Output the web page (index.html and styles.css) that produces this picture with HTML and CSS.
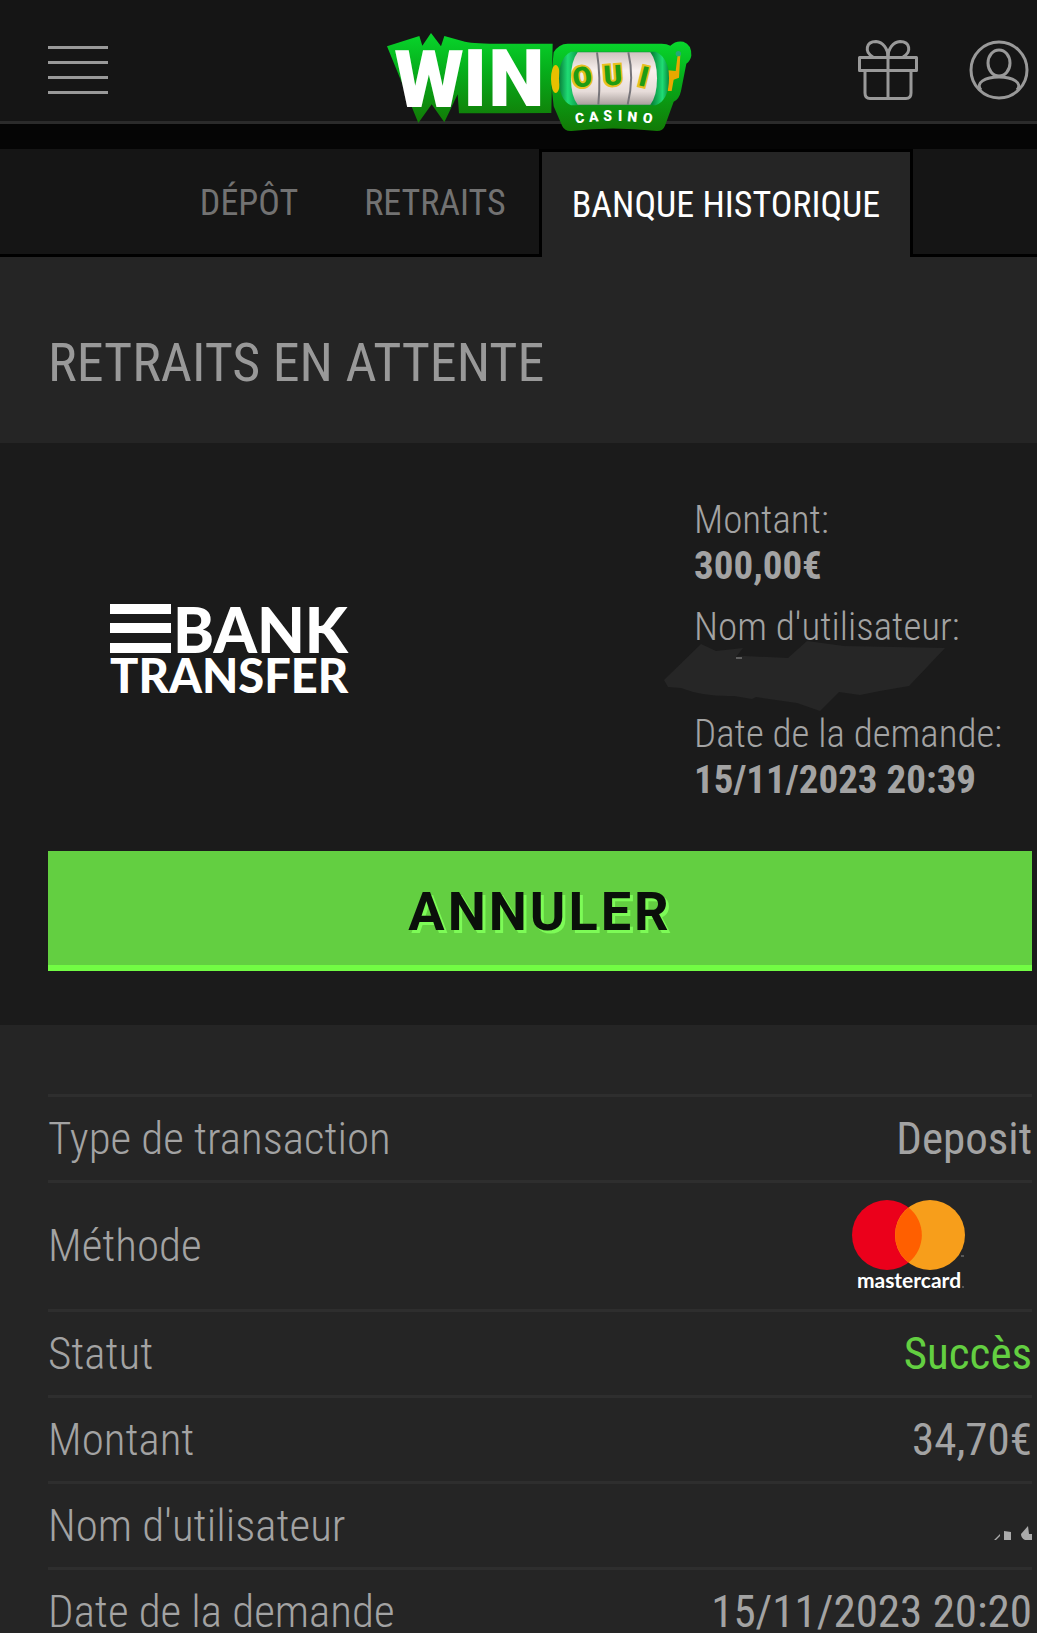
FILE: index.html
```html
<!DOCTYPE html>
<html lang="fr">
<head>
    <meta charset="UTF-8">
    <meta name="viewport" content="width=device-width, initial-scale=1.0">
    <title>WinOui Casino - Banque historique</title>
    <link rel="stylesheet" href="styles.css">
</head>
<body>
    <header class="header">
        <button type="button" class="menu-btn" aria-label="Menu">
            <span></span>
            <span></span>
            <span></span>
            <span></span>
        </button>

        <a href="#" class="logo" aria-label="WinOui Casino">
            <svg width="308" height="102" viewBox="50 60 924 306">
                <defs>
                    <linearGradient id="logoGreen" x1="0" y1="0" x2="0" y2="1">
                        <stop offset="0" stop-color="#08d62c"/>
                        <stop offset="0.4" stop-color="#06b01c"/>
                        <stop offset="1" stop-color="#127a06"/>
                    </linearGradient>
                    <linearGradient id="reel" x1="0" y1="0" x2="0" y2="1">
                        <stop offset="0" stop-color="#cfc3c0"/>
                        <stop offset="0.35" stop-color="#f8f0ee"/>
                        <stop offset="0.75" stop-color="#e6dcd9"/>
                        <stop offset="1" stop-color="#a89f9c"/>
                    </linearGradient>
                    <linearGradient id="reelSide" x1="0" y1="0" x2="1" y2="0">
                        <stop offset="0" stop-color="#07803a"/>
                        <stop offset="0.08" stop-color="#1fdc74"/>
                        <stop offset="0.2" stop-color="#078a3c"/>
                        <stop offset="0.85" stop-color="#078a3c"/>
                        <stop offset="0.94" stop-color="#1fdc74"/>
                        <stop offset="1" stop-color="#078a3c"/>
                    </linearGradient>
                </defs>
                <path fill="url(#logoGreen)" d="M56 106L153 75L162 104L188 66L218 106L228 75L290 92Q320 98 400 98L553 98L549 306L272 307L268 250L228 334L190 280L150 336Z"/>
                <path fill="url(#logoGreen)" d="M556 124Q572 97 600 98L880 98Q896 98 906 104Q922 88 945 92Q970 100 969 134Q966 150 954 158L938 240Q932 266 916 272L890 344Q884 360 866 360Q730 345 610 360Q590 362 582 346L556 286Q545 210 556 124Z"/>
                <ellipse cx="562" cy="204" rx="14" ry="42" fill="#e8c000"/>
                <path d="M900 178L922 180L928 132L936 132L932 200L916 206L910 240L898 240Z" fill="#e8a800"/>
                <circle cx="930" cy="128" r="8" fill="#28a878"/>
                <path d="M608 122H862Q902 140 902 202Q902 268 862 283H608Q572 268 572 202Q572 140 608 122Z" fill="url(#reelSide)"/>
                <path d="M628 124H846Q866 150 866 202Q866 256 846 281H628Q608 256 608 202Q608 150 628 124Z" fill="url(#reel)"/>
                <path d="M686 124Q698 200 690 281M780 124Q798 200 778 281" fill="none" stroke="#77757a" stroke-width="6"/>
                <g class="logo-win">
                    <text x="78" y="289">W</text>
                    <text x="284" y="284">I</text>
                    <text x="360" y="284">N</text>
                </g>
                <g class="logo-oui">
                    <text x="642" y="227" transform="rotate(-8 642 200)">O</text>
                    <text x="734" y="222" transform="rotate(-4 734 200)">U</text>
                    <text x="826" y="226" transform="rotate(14 826 200)">I</text>
                </g>
                <g class="logo-casino">
                    <text x="634" y="336" transform="rotate(-8 634 322)">C</text>
                    <text x="676" y="332" transform="rotate(-5 676 318)">A</text>
                    <text x="718" y="329">S</text>
                    <text x="755" y="329">I</text>
                    <text x="792" y="332" transform="rotate(5 792 318)">N</text>
                    <text x="838" y="336" transform="rotate(8 838 322)">O</text>
                </g>
            </svg>
        </a>

        <div class="header-actions">
            <button type="button" class="icon-btn" aria-label="Cadeaux">
                <svg width="60" height="60" viewBox="0 0 60 60" fill="none" stroke="currentColor" stroke-width="3" stroke-linejoin="round">
                    <rect x="1.5" y="17.5" width="57" height="13"/>
                    <path d="M7 31V53Q7 58.500 12 58.500H48Q53 58.500 53 53V31"/>
                    <path d="M30 58V11"/>
                    <path d="M15 17C6 12 8 1.500 18 1.500C25 2 30 9 30 17C30 9 35 2 42 1.500C52 1.500 54 12 45 17"/>
                </svg>
            </button>
            <button type="button" class="icon-btn" aria-label="Mon compte">
                <svg width="60" height="60" viewBox="0 0 60 60" fill="none" stroke="currentColor" stroke-width="3">
                    <circle cx="30" cy="30" r="28"/>
                    <ellipse cx="30" cy="23" rx="11" ry="13"/>
                    <path d="M12 50C6 43 16 37 30 37C44 37 54 43 48 50"/>
                </svg>
            </button>
        </div>
    </header>

    <nav class="tabs">
        <a href="#" class="tab">DÉPÔT</a>
        <a href="#" class="tab">RETRAITS</a>
        <a href="#" class="tab active">BANQUE HISTORIQUE</a>
    </nav>

    <main>
        <h1>RETRAITS EN ATTENTE</h1>

        <section class="pending">
            <div class="pending-info">
                <svg class="bank-logo" width="260" height="96" viewBox="0 0 260 96" role="img" aria-label="Bank Transfer">
                    <path d="M0 2H61V12H0ZM0 21H61V31H0ZM0 41H61V51H0Z" fill="#fff"/>
                    <text x="63" y="51" class="bank-word">BANK</text>
                    <text x="0" y="91" class="transfer-word">TRANSFER</text>
                </svg>
                <dl class="details">
                    <div>
                        <dt>Montant:</dt>
                        <dd>300,00€</dd>
                    </div>
                    <div>
                        <dt>Nom d'utilisateur:</dt>
                        <dd class="hidden-name">
                            <svg class="scribble" width="284" height="74" viewBox="0 0 284 74" aria-hidden="true">
                                <path d="M37 4L52 11L79 8L72 17L80 16L124 18L143 1L180 6L281 8L245 46L216 51L196 55L175 52L156 71L133 63L92 57L88 59L70 56Q40 57 17 48L4 47L0 40Z" fill="#262626"/>
                                <path d="M72 18H78" stroke="#999"/>
                            </svg>
                        </dd>
                    </div>
                    <div>
                        <dt>Date de la demande:</dt>
                        <dd>15/11/2023 20:39</dd>
                    </div>
                </dl>
            </div>
            <button type="button" class="cancel-btn">ANNULER</button>
        </section>

        <section class="history">
            <table>
                <tbody>
                    <tr>
                        <th scope="row">Type de transaction</th>
                        <td>Deposit</td>
                    </tr>
                    <tr class="method">
                        <th scope="row">Méthode</th>
                        <td>
                            <svg class="mastercard" width="114" height="92" viewBox="0 0 114 92" role="img" aria-label="Mastercard">
                                <circle cx="35" cy="35" r="35" fill="#eb001b"/>
                                <circle cx="78" cy="35" r="35" fill="#f79e1b"/>
                                <path d="M56.500 7.500A35 35 0 0 1 56.500 62.500A35 35 0 0 1 56.500 7.500Z" fill="#ff5f00"/>
                                <text x="57" y="88">mastercard</text>
                                <path d="M110 87H112M109 56H112" stroke="#888"/>
                            </svg>
                        </td>
                    </tr>
                    <tr>
                        <th scope="row">Statut</th>
                        <td class="success">Succès</td>
                    </tr>
                    <tr>
                        <th scope="row">Montant</th>
                        <td>34,70€</td>
                    </tr>
                    <tr>
                        <th scope="row">Nom d'utilisateur</th>
                        <td>
                            <svg class="erased" width="38" height="15" viewBox="0 0 38 15" aria-hidden="true">
                                <path d="M0 14L6 8V10L2 14ZM10 5L17 6V14H10ZM38 14H31Q27 12 27 8L34 0L35 8H38Z" fill="#aaa"/>
                            </svg>
                        </td>
                    </tr>
                    <tr>
                        <th scope="row">Date de la demande</th>
                        <td>15/11/2023 20:20</td>
                    </tr>
                </tbody>
            </table>
        </section>
    </main>
</body>
</html>
```
FILE: styles.css
```css
* {
    box-sizing: border-box;
}
body {
    margin: 0;
    font-family: "Roboto Condensed", "Liberation Sans Narrow", Roboto, sans-serif;
    background-color: #252525;
    color: #a3a3a3;
}
button {
    padding: 0;
    border: none;
    background: none;
    color: inherit;
    font-family: inherit;
    cursor: pointer;
}
a {
    text-decoration: none;
}

/* Header */
.header {
    display: grid;
    grid-template-columns: 1fr auto 1fr;
    align-items: center;
    height: 124px;
    padding: 18px 8px 0 48px;
    background-color: #151515;
    border-bottom: 3px solid #2b2b2b;
}
.menu-btn {
    display: flex;
    flex-direction: column;
    gap: 12px;
    width: 60px;
}
.menu-btn span {
    height: 3px;
    background-color: #999;
}
.logo {
    height: 78px;
    position: relative;
    z-index: 1;
}
.logo svg {
    display: block;
}
.logo-win {
    font-family: Roboto, sans-serif;
    font-size: 240px;
    font-weight: 900;
    fill: #fff;
}
.logo-oui {
    font-family: Roboto, sans-serif;
    font-size: 84px;
    font-weight: 900;
    text-anchor: middle;
    fill: #1f9c12;
    stroke: #e8c020;
    stroke-width: 12px;
    paint-order: stroke;
}
.logo-casino {
    font-family: Roboto, sans-serif;
    font-size: 42px;
    font-weight: 900;
    text-anchor: middle;
    fill: #fff;
}
.header-actions {
    display: flex;
    justify-content: flex-end;
    gap: 51px;
}
.icon-btn {
    height: 60px;
    color: #999;
}
.icon-btn svg {
    display: block;
}

/* Tabs */
.tabs {
    display: flex;
    justify-content: center;
    height: 133px;
    padding: 0 5px 0 48px;
    background-color: #151515;
    border-top: 25px solid #050505;
    border-bottom: 3px solid #000;
}
.tab {
    height: 105px;
    padding: 0 33px;
    font-size: 36px;
    line-height: 108px;
    color: #727272;
    white-space: nowrap;
}
.tab.active {
    height: 108px;
    padding: 0 30px;
    border: 3px solid #000;
    border-bottom: none;
    background-color: #252525;
    color: #fff;
    line-height: 106px;
}

h1 {
    margin: 0;
    padding: 74px 48px 48px;
    font-size: 54px;
    font-weight: 400;
    line-height: 64px;
    color: #999;
}

/* Pending withdrawal */
.pending {
    padding: 54px 5px 54px 48px;
    background-color: #1b1b1b;
}
.pending-info {
    display: grid;
    grid-template-columns: 1fr 338px;
    align-items: center;
    margin-bottom: 48px;
}
.bank-logo {
    margin-left: 62px;
}
.bank-word,
.transfer-word {
    font-family: Lato, sans-serif;
    font-weight: 900;
    fill: #fff;
}
.bank-word {
    font-size: 62px;
}
.transfer-word {
    font-size: 47px;
}
.details {
    display: grid;
    gap: 15px;
    margin: 0;
    font-size: 39px;
    line-height: 46px;
    white-space: nowrap;
}
.details dt {
    font-weight: 300;
}
.details dd {
    margin: 0;
    font-weight: 700;
}
.hidden-name {
    position: relative;
    height: 46px;
}
.scribble {
    position: absolute;
    top: -10px;
    left: -30px;
}
.cancel-btn {
    display: block;
    width: 100%;
    height: 120px;
    padding-top: 6px;
    border-bottom: 6px solid #72fc44;
    background-color: #63cf41;
    color: #0a0f0a;
    font-family: Roboto, sans-serif;
    font-size: 54px;
    font-weight: 700;
    letter-spacing: 3px;
    text-shadow: 3px 3px 0 #7dfb57;
}

/* Transactions */
.history {
    padding: 69px 5px 0 48px;
}
table {
    width: 100%;
    border-collapse: collapse;
}
tr {
    height: 86px;
    border-top: 3px solid #2e2e2e;
}
.method {
    height: 129px;
}
th,
td {
    padding: 0;
    font-size: 45px;
    line-height: 52px;
    white-space: nowrap;
}
th {
    font-weight: 300;
    text-align: left;
}
td {
    font-weight: 400;
    text-align: right;
}
td svg {
    display: block;
    margin-left: auto;
}
.success {
    color: #63cf41;
}
.mastercard {
    margin-right: 66px;
}
.mastercard text {
    font-family: Lato, sans-serif;
    font-size: 21px;
    font-weight: 700;
    text-anchor: middle;
    fill: #fff;
}
.erased {
    margin-top: 16px;
}
```
